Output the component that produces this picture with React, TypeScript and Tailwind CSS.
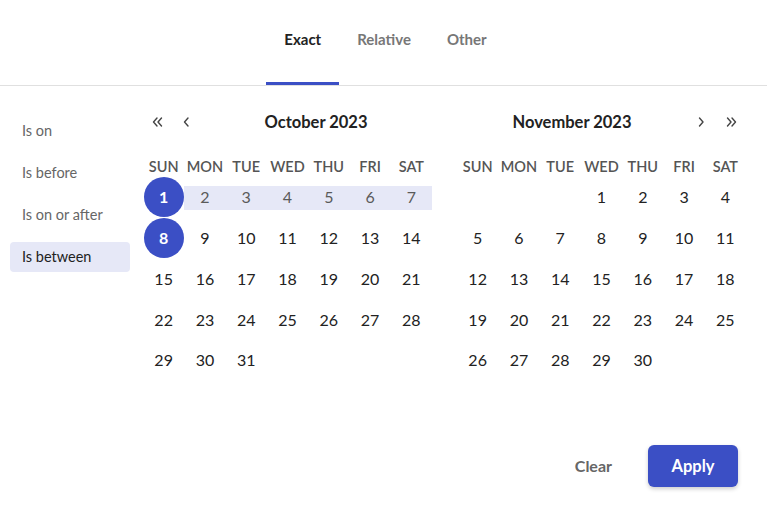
import React from "react";

const BLUE = "bg-[#3b4fc5]";

function Chev({ dir, double }: { dir: "l" | "r"; double?: boolean }) {
  const paths =
    dir === "l"
      ? double
        ? ["M5 1 L1.5 5 L5 9", "M9.5 1 L6 5 L9.5 9"]
        : ["M5 1 L1.5 5 L5 9"]
      : double
      ? ["M1.5 1 L5 5 L1.5 9", "M6 1 L9.5 5 L6 9"]
      : ["M1.5 1 L5 5 L1.5 9"];
  return (
    <svg width={double ? 11 : 7} height={10} viewBox={`0 0 ${double ? 11 : 7} 10`} fill="none">
      {paths.map((d, i) => (
        <path key={i} d={d} stroke="#444" strokeWidth={1.4} strokeLinecap="round" strokeLinejoin="round" />
      ))}
    </svg>
  );
}

const WEEK = ["SUN", "MON", "TUE", "WED", "THU", "FRI", "SAT"];

function Month({
  title,
  offset,
  days,
  side,
  selected,
}: {
  title: string;
  offset: number;
  days: number;
  side: "l" | "r";
  selected?: boolean;
}) {
  const cells: (number | null)[] = [];
  for (let i = 0; i < offset; i++) cells.push(null);
  for (let d = 1; d <= days; d++) cells.push(d);
  while (cells.length % 7) cells.push(null);
  const rows: (number | null)[][] = [];
  for (let i = 0; i < cells.length; i += 7) rows.push(cells.slice(i, i + 7));

  const nav =
    side === "l" ? (
      <div className="flex w-[57px]">
        <button className="w-[29px] h-[24px] flex items-center justify-center">
          <Chev dir="l" double />
        </button>
        <button className="w-[28px] h-[24px] flex items-center justify-center">
          <Chev dir="l" />
        </button>
      </div>
    ) : (
      <div className="flex w-[59px]">
        <button className="w-[29px] h-[24px] flex items-center justify-center">
          <Chev dir="r" />
        </button>
        <button className="w-[30px] h-[24px] flex items-center justify-center">
          <Chev dir="r" double />
        </button>
      </div>
    );

  return (
    <div className="w-[289px] flex flex-col">
      <div className="flex items-center h-[24px] mt-[1px]">
        {side === "l" && nav}
        <div className="flex-1 text-center text-[16.5px] font-bold text-[#222]">{title}</div>
        {side === "r" && nav}
      </div>
      <div className="grid grid-cols-7 mt-[23px] h-[20px] items-center">
        {WEEK.map((w) => (
          <div key={w} className="text-center text-[14.5px] font-semibold text-[#555] leading-[20px]">
            {w}
          </div>
        ))}
      </div>
      <div className="flex flex-col">
        {rows.map((r, ri) => (
          <div key={ri} className="grid grid-cols-7 h-[40.75px]">
            {r.map((d, ci) => {
              const isSel = selected && (d === 1 || d === 8);
              const inRange = selected && d !== null && d > 1 && d < 8;
              return (
                <div key={ci} className="relative flex items-center justify-center">
                  {inRange && <div className="absolute left-0 right-0 top-[8.5px] h-[24px] bg-[#e6e8f7]" />}
                  {isSel ? (
                    <div className={`relative w-[40px] h-[40px] rounded-full ${BLUE} text-white font-bold text-[16px] flex items-center justify-center`}>
                      {d}
                    </div>
                  ) : (
                    <span className={`relative text-[16px] ${inRange ? "text-[#5a5a5a]" : "text-[#222]"}`}>
                      {d ?? ""}
                    </span>
                  )}
                </div>
              );
            })}
          </div>
        ))}
      </div>
    </div>
  );
}

export default function App() {
  return (
    <div
      className="w-[767px] h-[508px] bg-white flex flex-col overflow-hidden"
      style={{ fontFamily: "Lato, 'Open Sans', sans-serif" }}
    >
      <div className="h-[86px] border-b border-[#e0e0e0] flex justify-center pl-[4px]">
        <div className="flex">
          <button className="px-[18px] pt-[30px] pb-[34px] border-b-[3px] border-[#3b4fc5] text-[15px] leading-[18px] font-bold text-[#222]">
            Exact
          </button>
          <button className="px-[18px] pt-[30px] pb-[34px] border-b-[3px] border-transparent text-[15px] leading-[18px] font-bold text-[#777]">
            Relative
          </button>
          <button className="px-[18px] pt-[30px] pb-[34px] border-b-[3px] border-transparent text-[15px] leading-[18px] font-bold text-[#777]">
            Other
          </button>
        </div>
      </div>
      <div className="flex">
        <div className="w-[140px] px-[10px] pt-[30px] flex flex-col gap-[12px]">
          {["Is on", "Is before", "Is on or after", "Is between"].map((t, i) => (
            <div
              key={t}
              className={`h-[30px] rounded-[4px] px-[12px] flex items-center text-[14.5px] ${
                i === 3 ? "bg-[#e6e8f7] text-[#222]" : "text-[#666]"
              }`}
            >
              {t}
            </div>
          ))}
        </div>
        <div className="flex gap-[25px] ml-[3px] pt-[23px]">
          <Month title="October 2023" offset={0} days={31} side="l" selected />
          <Month title="November 2023" offset={3} days={30} side="r" />
        </div>
      </div>
      <div className="mt-auto flex justify-end items-center gap-[18px] pr-[29px] pb-[21px]">
        <button className="px-[18px] h-[42px] text-[16px] font-bold text-[#666]">Clear</button>
        <button className={`w-[90px] h-[42px] rounded-[6px] ${BLUE} text-white text-[16.5px] font-bold shadow-[0_2px_4px_rgba(0,0,0,0.2)]`}>
          Apply
        </button>
      </div>
    </div>
  );
}
